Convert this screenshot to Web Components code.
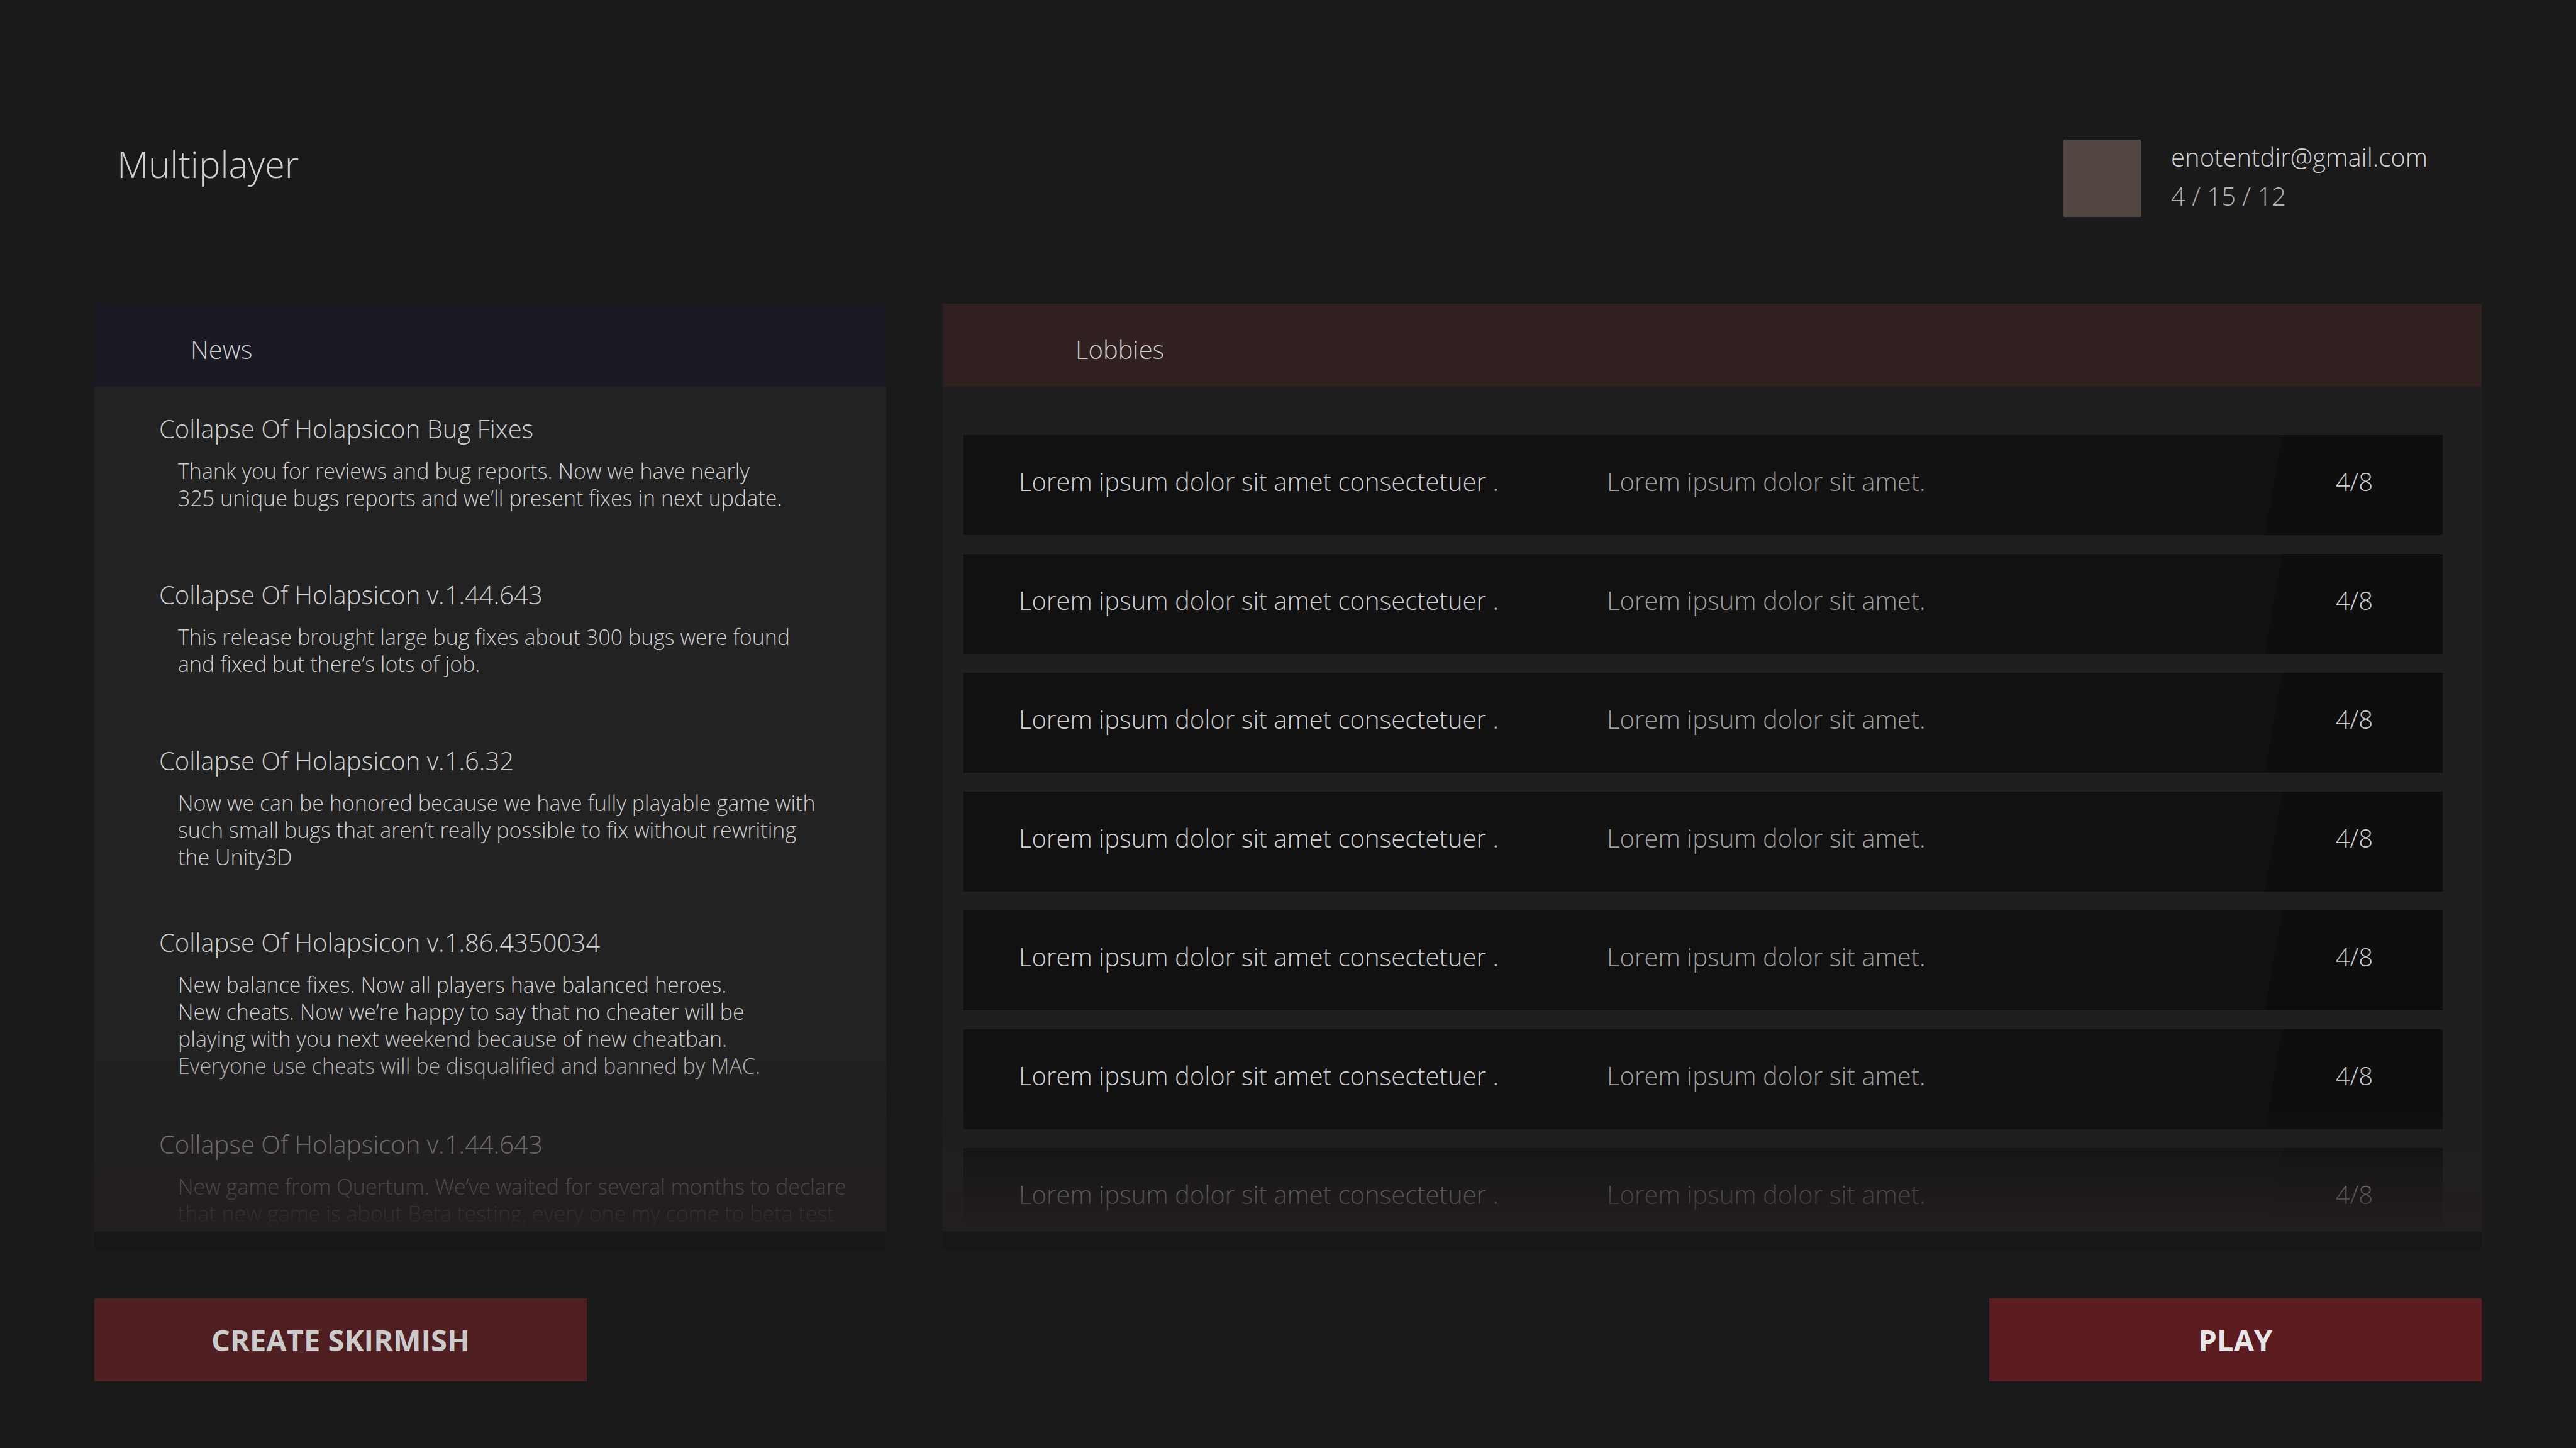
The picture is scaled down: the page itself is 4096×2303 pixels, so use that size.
<!DOCTYPE html>
<html lang="en">
<head>
<meta charset="utf-8">
<title>Multiplayer</title>
<style>
  html, body { margin: 0; min-height: 100%; background: #1a1a1a; }
  body {
    font-family: "Open Sans", "Noto Sans", sans-serif;
    font-weight: 300; font-size: 40px; line-height: 58px; color: #d0d0d0;
  }
</style>
</head>
<body>
<multiplayer-screen></multiplayer-screen>
<script>
const define = (name, html, init) => {
  const t = document.createElement('template');
  t.innerHTML = html;
  customElements.define(name, class extends HTMLElement {
    constructor() {
      super();
      this.attachShadow({ mode: 'open' }).append(t.content.cloneNode(true));
    }
    connectedCallback() { if (init) init(this, this.shadowRoot); }
  });
};

define('user-badge', `
<style>
  :host { display: flex; gap: 48px; }
  .avatar { width: 123px; height: 123px; background: #514641; }
  .lines { display: flex; flex-direction: column; gap: 6px; }
  .lines ::slotted(*) { display: block; line-height: 56px; }
  ::slotted([slot=date]) { color: #b0b0b0; }
</style>
<div class="avatar"></div>
<div class="lines"><slot name="name"></slot><slot name="date"></slot></div>`);

define('menu-panel', `
<style>
  :host { display: block; background: #171717; padding-bottom: 29px; box-sizing: border-box; }
  .frame { position: relative; display: flex; flex-direction: column; height: 1476px; background: var(--body); overflow: hidden; }
  header { height: 132px; box-sizing: border-box; padding: 44px var(--indent) 0; background: var(--head); flex: none; }
  h2 { margin: 0; font: inherit; }
  .fade { position: absolute; left: 0; right: 0; bottom: 0; height: var(--fade);
    background: linear-gradient(rgba(35,30,31,0), #231e1f); }
</style>
<section class="frame">
  <header><h2><slot name="title"></slot></h2></header>
  <slot></slot>
  <div class="fade"></div>
</section>`);

define('news-item', `
<style>
  :host { display: block; white-space: nowrap; }
  h3 { margin: 0 0 17px; font: inherit; }
  p { margin: 0; padding-left: 30px; font-size: 34px; line-height: 43px; white-space: pre; }
</style>
<h3><slot name="title"></slot></h3>
<p><slot></slot></p>`);

define('lobby-row', `
<style>
  :host { display: block; }
  .row {
    display: grid; grid-template-columns: 935px 1fr auto; align-items: start;
    height: 159px; box-sizing: border-box; padding: 45px 111px 0 88px; white-space: nowrap;
    background: linear-gradient(100deg, transparent calc(100% - 279px), #0e0e0e calc(100% - 278px)), #111;
  }
  .map { color: #9f9f9f; }
</style>
<div class="row"><span><slot></slot></span><span class="map"><slot name="map"></slot></span><span><slot name="count"></slot></span></div>`);

define('menu-button', `
<style>
  :host { display: block; width: 783px; }
  button { display: block; width: 100%; height: 132px; border: 0; padding: 0; margin: 0;
    font: inherit; font-size: 47px; font-weight: 700; line-height: 64px; cursor: pointer;
    background: #4f1f22; color: #cbcbcb; }
  :host([primary]) button { background: #5c1d21; color: #e6e6e6; }
</style>
<button type="button"><slot></slot></button>`);

const news = [
  ['Collapse Of Holapsicon Bug Fixes', 'Thank you for reviews and bug reports. Now we have nearly\n325 unique bugs reports and we’ll present fixes in next update.'],
  ['Collapse Of Holapsicon v.1.44.643', 'This release brought large bug fixes about 300 bugs were found\nand fixed but there’s lots of job.'],
  ['Collapse Of Holapsicon v.1.6.32', 'Now we can be honored because we have fully playable game with\nsuch small bugs that aren’t really possible to fix without rewriting\nthe Unity3D'],
  ['Collapse Of Holapsicon v.1.86.4350034', 'New balance fixes. Now all players have balanced heroes.\nNew cheats. Now we’re happy to say that no cheater will be\nplaying with you next weekend because of new cheatban.\nEveryone use cheats will be disqualified and banned by MAC.'],
  ['Collapse Of Holapsicon v.1.44.643', 'New game from Quertum. We’ve waited for several months to declare\nthat new game is about Beta testing, every one my come to beta test'],
];

define('multiplayer-screen', `
<style>
  :host { display: block; padding: 222px 150px 106px; }
  .top { display: flex; justify-content: space-between; height: 261px; padding: 0 86px 0 36px; }
  h1 { margin: 0; font: inherit; font-size: 58px; line-height: 78px; }
  .panels { display: grid; grid-template-columns: 1259fr 2447fr; gap: 90px; }
  .news { --head: #1a1a24; --body: #222; --indent: 153px; --fade: 314px; }
  .lobbies { --head: #302020; --body: #1f1f1f; --indent: 211px; --fade: 194px; }
  .items { display: grid; grid-template-rows: 264px 264px 289px 321px auto; padding: 38px 40px 0 103px; }
  .rows { display: flex; flex-direction: column; gap: 30px; padding: 77px 62px 0 33px; }
  .actions { display: flex; justify-content: space-between; padding-top: 77px; }
</style>
<div class="top">
  <h1>Multiplayer</h1>
  <user-badge><span slot="name">enotentdir@gmail.com</span><span slot="date">4 / 15 / 12</span></user-badge>
</div>
<main class="panels">
  <menu-panel class="news"><span slot="title">News</span><div class="items"></div></menu-panel>
  <menu-panel class="lobbies"><span slot="title">Lobbies</span><div class="rows"></div></menu-panel>
</main>
<div class="actions">
  <menu-button>CREATE SKIRMISH</menu-button>
  <menu-button primary>PLAY</menu-button>
</div>`, (host, root) => {
  root.querySelector('.items').innerHTML = news.map(([t, b]) =>
    `<news-item><span slot="title">${t}</span>${b}</news-item>`).join('');
  root.querySelector('.rows').innerHTML = Array(7).fill(
    `<lobby-row>Lorem ipsum dolor sit amet consectetuer .<span slot="map">Lorem ipsum dolor sit amet.</span><span slot="count">4/8</span></lobby-row>`).join('');
});
</script>
</body>
</html>
